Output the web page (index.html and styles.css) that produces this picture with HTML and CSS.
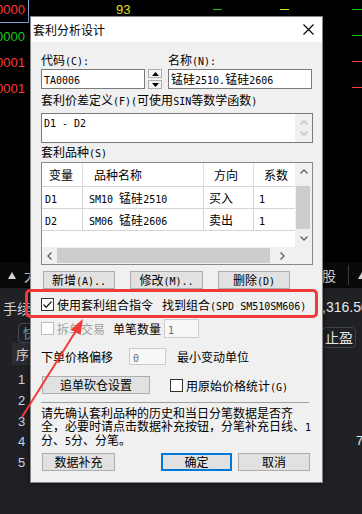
FILE: index.html
```html
<!DOCTYPE html>
<html lang="zh-CN">
<head>
<meta charset="utf-8">
<title>套利分析设计</title>
<link rel="stylesheet" href="styles.css">
</head>
<body>
<div class="screen">
  <div class="app">
    <div class="app-top">
      <div class="lcol">
        <div class="num sel red">0000</div>
        <div class="num green">0000</div>
        <div class="num red">0001</div>
        <div class="num red">0001</div>
      </div>
      <div class="mid">
        <span class="v93">93</span>
        <span class="dash dash-a green-bg"></span>
        <span class="dash dash-b yellow-bg"></span>
      </div>
      <div class="rcol">
        <span class="dash green-bg"></span>
        <span class="dash green-bg"></span>
        <span class="dash red-bg"></span>
        <span class="dash red-bg"></span>
      </div>
    </div>
    <div class="app-bar">
      <div class="bar-left">
        <svg class="tri" width="8" height="7" viewBox="0 0 8 7"><path d="M4 0 L8 7 L0 7 Z" fill="#d4d4d4"/></svg>
        <span class="bar-txt">大</span>
      </div>
      <div></div>
      <div class="bar-right">
        <span class="bar-txt">股</span>
        <span class="bar-div"></span>
        <svg class="tri" width="8" height="7" viewBox="0 0 8 7"><path d="M4 0 L8 7 L0 7 Z" fill="#d4d4d4"/></svg>
      </div>
    </div>
    <div class="app-bottom">
      <div class="bl">
        <div class="fee">手续</div>
        <div class="pill">快</div>
        <div class="th">序.</div>
        <div class="idx">1</div>
        <div class="idx">2</div>
        <div class="idx">3</div>
        <div class="idx">4</div>
        <div class="idx">5</div>
      </div>
      <div></div>
      <div class="br">
        <div class="price">,316.50</div>
        <div class="pill2">止盈</div>
        <div class="seven">7</div>
      </div>
    </div>
  </div>

  <div class="dialog">
    <div class="titlebar">
      <span class="title">套利分析设计</span>
      <svg class="close" width="11" height="11" viewBox="0 0 11 11"><path d="M0.5 0.5 L10.5 10.5 M10.5 0.5 L0.5 10.5" stroke="#000" stroke-width="1.1" fill="none"/></svg>
    </div>
    <div class="body">
      <div class="r-top">
        <div class="field">
          <div class="lbl">代码<span class="a">(C):</span></div>
          <div class="code-wrap">
            <div class="edit code"><span class="a">TA0006</span></div>
            <div class="spin">
              <div class="spin-btn"><svg width="7" height="4" viewBox="0 0 7 4"><path d="M3.5 0 L7 4 L0 4 Z" fill="#000"/></svg></div>
              <div class="spin-btn"><svg width="7" height="4" viewBox="0 0 7 4"><path d="M0 0 L7 0 L3.5 4 Z" fill="#000"/></svg></div>
            </div>
          </div>
        </div>
        <div class="field">
          <div class="lbl">名称<span class="a">(N):</span></div>
          <div class="edit">锰硅<span class="a">2510.</span>锰硅<span class="a">2606</span></div>
        </div>
      </div>

      <div class="lbl mt4">套利价差定义<span class="a">(F)(</span>可使用<span class="a">SIN</span>等数学函数<span class="a">)</span></div>
      <div class="memo">
        <div class="memo-text"><span class="a">D1 - D2</span></div>
        <div class="vscroll small">
          <div class="sb-arrow"><svg width="8" height="5" viewBox="0 0 8 5"><path d="M0.5 4.5 L4 1 L7.5 4.5" fill="none" stroke="#bfbfbf" stroke-width="1.3"/></svg></div>
          <div class="sb-arrow"><svg width="8" height="5" viewBox="0 0 8 5"><path d="M0.5 0.5 L4 4 L7.5 0.5" fill="none" stroke="#bfbfbf" stroke-width="1.3"/></svg></div>
        </div>
      </div>

      <div class="lbl mt2">套利品种<span class="a">(S)</span></div>
      <div class="listview">
        <div class="lv-content">
          <div class="lv-row lv-head">
            <div class="c c1">变量</div>
            <div class="c c2">品种名称</div>
            <div class="c c3">方向</div>
            <div class="c c4">系数</div>
          </div>
          <div class="lv-row">
            <div class="c c1"><span class="a">D1</span></div>
            <div class="c c2"><span class="a">SM10 </span>锰硅<span class="a">2510</span></div>
            <div class="c c3">买入</div>
            <div class="c c4"><span class="a">1</span></div>
          </div>
          <div class="lv-row">
            <div class="c c1"><span class="a">D2</span></div>
            <div class="c c2"><span class="a">SM06 </span>锰硅<span class="a">2606</span></div>
            <div class="c c3">卖出</div>
            <div class="c c4"><span class="a">1</span></div>
          </div>
        </div>
        <div class="vscroll">
          <div class="sb-arrow"><svg width="8" height="5" viewBox="0 0 8 5"><path d="M0.5 4.5 L4 1 L7.5 4.5" fill="none" stroke="#606060" stroke-width="1.3"/></svg></div>
          <div class="sb-track"><div class="sb-thumb-v"></div></div>
          <div class="sb-arrow"><svg width="8" height="5" viewBox="0 0 8 5"><path d="M0.5 0.5 L4 4 L7.5 0.5" fill="none" stroke="#606060" stroke-width="1.3"/></svg></div>
        </div>
        <div class="hscroll">
          <div class="sb-arrow-h"><svg width="5" height="8" viewBox="0 0 5 8"><path d="M4.5 0.5 L1 4 L4.5 7.5" fill="none" stroke="#606060" stroke-width="1.3"/></svg></div>
          <div class="sb-thumb-h"></div>
          <div class="sb-arrow-h"><svg width="5" height="8" viewBox="0 0 5 8"><path d="M0.5 0.5 L4 4 L0.5 7.5" fill="none" stroke="#606060" stroke-width="1.3"/></svg></div>
        </div>
        <div class="corner"></div>
      </div>

      <div class="btn-row">
        <div class="btn">新增<span class="a">(A)..</span></div>
        <div class="btn">修改<span class="a">(M)..</span></div>
        <div class="btn">删除<span class="a">(D)</span></div>
      </div>

      <div class="line r1">
        <span class="chk"><svg width="11" height="11" viewBox="0 0 11 11"><path d="M1.5 5.5 L4.2 8.2 L9.5 2.5" fill="none" stroke="#222" stroke-width="1.3"/></svg></span>
        <span class="ml3">使用套利组合指令</span>
        <span class="ml9">找到组合<span class="a">(SPD SM510SM606)</span></span>
      </div>

      <div class="line r2">
        <span class="chk off"></span>
        <span class="ml3 dis">拆单交易</span>
        <span class="ml8">单笔数量</span>
        <span class="edit num-edit w35"><span class="a">1</span></span>
      </div>

      <div class="line r3">
        <span>下单价格偏移</span>
        <span class="edit num-edit w37 ml16"><span class="a">0</span></span>
        <span class="ml11">最小变动单位</span>
      </div>

      <div class="line r4">
        <div class="btn w108 ml1">追单砍仓设置</div>
        <span class="chk ml20"></span>
        <span class="ml3">用原始价格统计<span class="a">(G)</span></span>
      </div>

      <div class="sep"></div>

      <p class="note">请先确认套利品种的历史和当日分笔数据是否齐<br>全，必要时请点击数据补充按钮，分笔补充日线、<span class="a">1</span><br>分、<span class="a">5</span>分、分笔。</p>

      <div class="line foot">
        <div class="btn w73 ml1">数据补充</div>
        <div class="btn btn-def w71 ml46">确定</div>
        <div class="btn w72 ml6">取消</div>
      </div>
    </div>
  </div>

  <div class="mark"></div>
  <svg class="arrow" width="362" height="514" viewBox="0 0 362 514">
    <line x1="22" y1="417" x2="79" y2="326" stroke="#f23a3a" stroke-width="2"/>
    <path d="M83 319 L80.5 335 L71 329.5 Z" fill="#f23a3a"/>
  </svg>
</div>
</body>
</html>
```

FILE: styles.css
```css
* { box-sizing: border-box; margin: 0; padding: 0; }
html, body { width: 362px; height: 514px; overflow: hidden; }
body { font-family: "Noto Sans CJK SC", "Noto Sans", sans-serif; }

.screen { position: relative; width: 362px; height: 514px; overflow: hidden; background: #1f2125; }

/* background application */
.app { display: flex; flex-direction: column; width: 362px; height: 514px; }
.app-top { height: 262px; flex: none; background: #000; display: grid; grid-template-columns: 29px 1fr 10px; overflow: hidden; font-family: "Liberation Sans", Arial, sans-serif; font-size: 13px; }
.lcol { margin-top: -3px; }
.num { height: 26px; display: flex; justify-content: flex-end; align-items: center; padding-right: 4px; white-space: nowrap; overflow: hidden; }
.num.sel { border-right: 1px solid #7ea6d6; border-bottom: 1px solid #7ea6d6; padding-right: 3px; height: 26px; }
.red { color: #ff3a3a; }
.green { color: #19c819; }
.mid { display: flex; align-items: flex-start; height: 20px; }
.v93 { margin-left: 87px; color: #e6e61e; line-height: 20px; }
.dash { display: block; width: 9px; height: 1px; flex: none; }
.dash-a { margin-left: 83px; margin-top: 9px; }
.dash-b { margin-left: 58px; margin-top: 9px; }
.green-bg { background: #19c819; }
.yellow-bg { background: #e6e61e; }
.red-bg { background: #ff3a3a; }
.rcol { display: flex; flex-direction: column; gap: 25px; padding-top: 9px; }
.rcol .dash { width: 10px; }

.app-bar { height: 26px; flex: none; background: #0a0a0b; display: grid; grid-template-columns: 30px 1fr 40px; align-items: center; color: #d4d4d4; font-size: 14px; overflow: hidden; }
.bar-left { display: flex; align-items: center; padding-left: 8px; gap: 8px; white-space: nowrap; overflow: hidden; }
.bar-right { display: flex; align-items: center; white-space: nowrap; overflow: hidden; height: 26px; }
.bar-left > *, .bar-right > * { flex: none; }
.tri { display: block; }
.bar-txt { line-height: 16px; }
.bar-div { width: 1px; height: 20px; background: #3a3c40; margin: 0 9px 0 12px; }

.app-bottom { flex: 1; display: grid; grid-template-columns: 30px 1fr 40px; background: #1f2125; overflow: hidden; }
.bl { display: flex; flex-direction: column; overflow: hidden; color: #cfd3d8; }
.bl > *, .br > * { flex: none; }
.fee { margin-top: 10px; height: 20px; line-height: 20px; font-size: 14px; padding-left: 3px; white-space: nowrap; }
.pill { margin-top: 5px; margin-left: 18px; width: 30px; height: 20px; border: 1px solid #474a52; border-radius: 4px; font-size: 13px; line-height: 18px; padding-left: 4px; color: #5fb0c8; white-space: nowrap; }
.th { height: 22px; margin-left: 12px; background: #2b2d32; font-size: 13px; line-height: 22px; padding-left: 4px; margin-bottom: 5px; white-space: nowrap; }
.idx { height: 20.75px; line-height: 20.75px; padding-left: 18px; font-family: "Liberation Sans", Arial, sans-serif; font-size: 13px; color: #c8d6ea; }
.br { display: flex; flex-direction: column; overflow: hidden; color: #e8e8e8; }
.price { margin-top: 9px; height: 20px; line-height: 20px; font-family: "Liberation Sans", Arial, sans-serif; font-size: 14px; white-space: nowrap; }
.pill2 { margin-top: 10px; width: 34px; height: 21px; border: 1px solid #3e4148; border-radius: 4px; font-size: 14px; line-height: 19px; padding-left: 2px; white-space: nowrap; }
.seven { margin-top: 83px; padding-left: 34px; height: 20px; line-height: 20px; font-family: "Liberation Sans", Arial, sans-serif; font-size: 13px; }

/* dialog */
.dialog { position: absolute; left: 30px; top: 16px; width: 293px; height: 467px; background: #f0f0f0; border: 1px solid #858585; box-shadow: 0 0 7px rgba(0,0,0,0.5); font-size: 12px; color: #000; display: flex; flex-direction: column; }
.titlebar { height: 25px; flex: none; background: #fff; display: flex; align-items: center; justify-content: space-between; padding: 0 8px 0 2px; }
.title { line-height: 14px; }
.close { display: block; }
.body { padding: 11px 9px 0 10px; display: flex; flex-direction: column; }

.a { font-family: "DejaVu Sans Mono", "Liberation Mono", monospace; font-size: 10px; }
.lbl { height: 14px; line-height: 14px; white-space: nowrap; }
.mt4 { margin-top: 4px; }
.mt2 { margin-top: 2px; }

.r-top { display: grid; grid-template-columns: 121px 144px; column-gap: 6px; }
.field { display: flex; flex-direction: column; gap: 2px; }
.edit { height: 20px; background: #fff; border: 1px solid #7a7a7a; padding: 0 2px; line-height: 18px; white-space: nowrap; overflow: hidden; }
.code-wrap { display: flex; gap: 3px; }
.code { width: 104px; }
.spin { width: 14px; height: 20px; display: flex; flex-direction: column; justify-content: space-between; }
.spin-btn { height: 9px; border: 1px solid #adadad; background: #f4f4f4; display: flex; align-items: center; justify-content: center; }
.spin-btn svg { display: block; }

.memo { margin-top: 6px; height: 30px; border: 1px solid #7a7a7a; background: #fff; display: flex; }
.memo-text { flex: 1; padding: 1px 2px; line-height: 14px; white-space: nowrap; }
.vscroll { width: 17px; flex: none; background: #f0f0f0; display: flex; flex-direction: column; }
.vscroll.small { justify-content: space-between; padding: 3px 0; }
.sb-arrow { height: 17px; display: flex; align-items: center; justify-content: center; }
.vscroll.small .sb-arrow { height: 11px; }
.sb-arrow svg, .sb-arrow-h svg { display: block; }
.sb-track { flex: 1; padding: 6px 2px 1px 1px; }
.sb-thumb-v { height: 43px; background: #cdcdcd; }

.listview { margin-top: 3px; height: 103px; border: 1px solid #828790; background: #fff; display: grid; grid-template-columns: 1fr 17px; grid-template-rows: 1fr 17px; }
.lv-content { overflow: hidden; }
.lv-row { display: flex; height: 22px; border-bottom: 1px solid #d5d5d5; line-height: 21px; white-space: nowrap; }
.lv-head { height: 24px; line-height: 24px; }
.c { flex: none; border-right: 1px solid #d5d5d5; overflow: hidden; }
.c1 { width: 41px; padding-left: 3px; }
.c2 { width: 121px; padding-left: 6px; }
.c3 { width: 50px; padding-left: 5px; }
.c4 { width: 60px; padding-left: 5px; }
.lv-head .c { border-right-color: #e0e0e0; }
.lv-head .c1 { padding-left: 7px; }
.lv-head .c2 { padding-left: 11px; }
.lv-head .c3 { padding-left: 10px; }
.lv-head .c4 { padding-left: 10px; }
.hscroll { background: #f0f0f0; display: flex; align-items: stretch; }
.sb-arrow-h { width: 15px; display: flex; align-items: center; justify-content: center; }
.sb-thumb-h { width: 213px; margin: 1px 0; background: #cdcdcd; }
.hscroll .sb-arrow-h:last-child { flex: 1; }
.corner { background: #f0f0f0; }

.btn { height: 18px; background: #e1e1e1; border: 1px solid #adadad; line-height: 16px; text-align: center; white-space: nowrap; }
.btn-row { margin-top: 6px; padding-left: 2px; display: grid; grid-template-columns: 72px 73px 72px; column-gap: 15px; }
.btn-def { border: 2px solid #0078d7; line-height: 14px; }

.line { display: flex; align-items: center; white-space: nowrap; }
.line > * { flex: none; }
.r1 { margin-top: 7px; height: 16px; }
.r2 { margin-top: 6px; height: 20px; }
.r3 { margin-top: 9px; height: 18px; }
.r4 { margin-top: 11px; height: 18px; }
.foot { margin-top: 8px; height: 18px; }

.chk { width: 13px; height: 13px; border: 1px solid #333; background: #fff; display: flex; align-items: center; justify-content: center; }
.chk svg { display: block; }
.chk.off { border-color: #bcbcbc; }
.dis { color: #a0a0a0; }
.num-edit { height: 19px; border-color: #cccccc; background: #f7f7f7; color: #6d6d6d; line-height: 17px; padding-left: 3px; }
.r3 .num-edit { height: 17px; line-height: 15px; }
.w35 { width: 35px; margin-left: 3px; }
.w37 { width: 37px; }
.w108 { width: 108px; }
.w73 { width: 73px; }
.w71 { width: 71px; }
.w72 { width: 72px; }
.ml1 { margin-left: 1px; }
.ml3 { margin-left: 3px; }
.ml6 { margin-left: 6px; }
.ml8 { margin-left: 8px; }
.ml9 { margin-left: 9px; }
.ml11 { margin-left: 11px; }
.ml16 { margin-left: 16px; }
.ml20 { margin-left: 20px; }
.ml46 { margin-left: 46px; }

.sep { margin-top: 8px; height: 1px; width: 268px; background: #a0a0a0; }
.note { margin-top: 4px; height: 38px; line-height: 12.5px; white-space: nowrap; }

/* annotation overlay */
.mark { position: absolute; left: 25px; top: 289px; width: 293px; height: 29px; border: 3px solid #f23a3a; border-radius: 5px; }
.arrow { position: absolute; left: 0; top: 0; pointer-events: none; }
```
